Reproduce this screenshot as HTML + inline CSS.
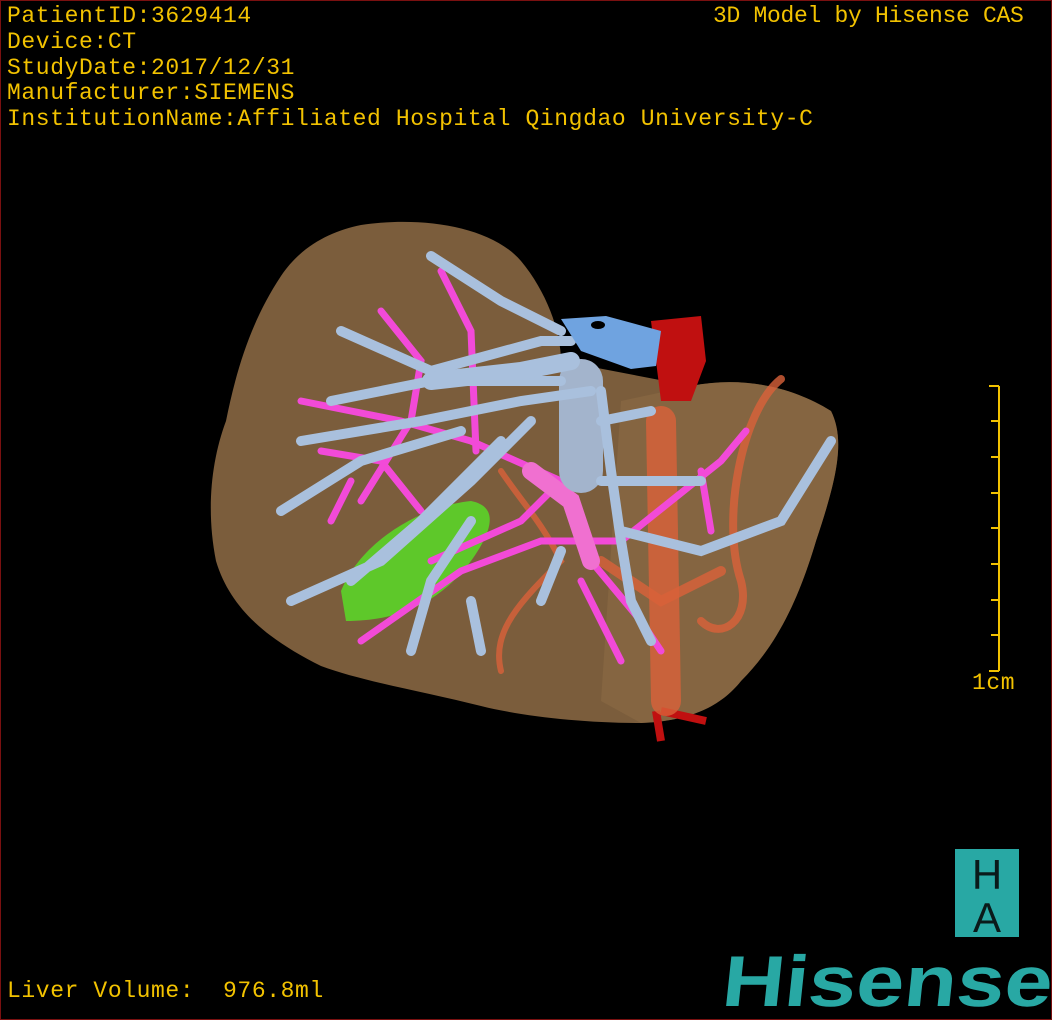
<!DOCTYPE html>
<html><head><meta charset="utf-8"><style>
html,body{margin:0;padding:0;background:#000;}
#w{position:relative;width:1052px;height:1020px;overflow:hidden;background:#000;box-sizing:border-box;border:1px solid #7a1010;}
.t{position:absolute;font-family:"Liberation Mono",monospace;color:#f2c200;font-size:23px;letter-spacing:0.6px;white-space:nowrap;line-height:25.8px;}
</style></head><body><div id="w">
<div class="t" style="left:6px;top:3px;">PatientID:3629414<br>Device:CT<br>StudyDate:2017/12/31<br>Manufacturer:SIEMENS<br>InstitutionName:Affiliated Hospital Qingdao University-C</div>
<div class="t" style="left:712px;top:3px;letter-spacing:-0.3px;">3D Model by Hisense CAS</div>
<div class="t" style="left:6px;top:978px;">Liver Volume:&nbsp; 976.8ml</div>
<div class="t" style="left:971px;top:670px;">1cm</div>
<svg width="1052" height="1020" style="position:absolute;left:0;top:0">
<g stroke="#f2c200" stroke-width="2">
<line x1="998" y1="385" x2="998" y2="670"/>
<line x1="988" y1="385" x2="998" y2="385"/><line x1="990" y1="420" x2="998" y2="420"/><line x1="990" y1="456" x2="998" y2="456"/><line x1="990" y1="492" x2="998" y2="492"/><line x1="990" y1="527" x2="998" y2="527"/><line x1="990" y1="563" x2="998" y2="563"/><line x1="990" y1="599" x2="998" y2="599"/><line x1="990" y1="634" x2="998" y2="634"/><line x1="988" y1="670" x2="998" y2="670"/>
</g>
<path d="M360,224 C420,215 490,225 520,260 C545,290 560,330 560,360 L690,385 C740,375 790,385 830,410 C845,440 835,480 815,540 C800,590 780,640 740,680 C720,705 690,720 640,722 C580,722 520,715 480,705 C420,690 360,680 320,665 C270,640 230,610 215,560 C205,510 210,460 225,420 C235,370 250,320 280,275 C300,245 330,230 360,224 Z" fill="#7b5d3c"/>
<path d="M690,385 C740,375 790,385 830,410 C845,440 835,480 815,540 C800,590 780,640 740,680 C720,705 690,720 640,722 L600,700 L620,400 Z" fill="#8c6a44" opacity="0.6"/>
<path d="M650,320 L700,315 L705,360 L690,400 L660,400 Z" fill="#c01010"/>
<path d="M655,710 L660,740 M660,710 L705,720" stroke="#c01010" stroke-width="8" fill="none"/>
<g fill="none" stroke="#d9623a" stroke-opacity="0.8" stroke-linecap="round">
<path d="M660,420 L665,700" stroke-width="30"/>
<path d="M780,378 C740,410 720,520 740,580 C750,620 720,640 700,620" stroke-width="8"/>
<path d="M500,470 C520,500 540,520 560,560 C520,600 490,630 500,670" stroke-width="6"/>
<path d="M600,560 L660,600 L720,570" stroke-width="10"/>
</g>
<path d="M340,590 C360,540 420,505 470,500 C495,505 495,525 470,560 C440,600 400,620 345,620 Z" fill="#5ec82a"/>
<g fill="none" stroke="#f24ad8" stroke-linecap="round">
<path d="M380,310 L420,360 L410,420 L360,500 M440,270 L470,330 L475,450 M300,400 L400,420 L470,440 L560,480 L590,560 L640,620 L660,650 M320,450 L380,460 L420,510 M360,640 L460,570 L540,540 L620,540 L720,460 L745,430 M560,480 L520,520 L430,560 M580,580 L600,620 L620,660 M350,480 L330,520 M700,470 L710,530" stroke-width="7"/>
<path d="M530,470 L570,500 L590,560" stroke-width="18" stroke="#f070d0"/>
</g>
<g fill="none" stroke="#a9c0dd" stroke-linecap="round">
<path d="M580,380 L580,470" stroke-width="44" stroke="#a3b4cc"/>
<path d="M430,255 L500,300 L560,330 M340,330 L430,370 L540,340 L570,340 M330,400 L430,380 L560,380 M300,440 L420,420 L520,400 L590,390 M280,510 L360,460 L460,430 M290,600 L380,560 L470,480 L530,420 M350,580 L420,520 L500,440 M410,650 L430,580 L470,520 M600,390 L610,470 L620,540 L630,600 L650,640 M600,420 L650,410 M600,480 L700,480 M620,530 L700,550 L780,520 L830,440 M560,550 L540,600 M470,600 L480,650" stroke-width="10"/>
<path d="M430,380 L520,370 L570,360" stroke-width="18"/>
</g>
<path d="M560,318 L605,315 L660,330 L655,365 L630,368 L580,350 Z" fill="#6fa3e0"/>
<ellipse cx="597" cy="324" rx="7" ry="4" fill="#000"/>
<rect x="954" y="848" width="64" height="88" fill="#28a8a4"/>
<text x="986" y="888" font-family="Liberation Sans,sans-serif" font-size="42" fill="#0a1a1a" text-anchor="middle">H</text>
<text x="986" y="931" font-family="Liberation Sans,sans-serif" font-size="42" fill="#0a1a1a" text-anchor="middle">A</text>
<text x="720" y="1005" font-family="Liberation Sans,sans-serif" font-size="72" font-weight="bold" fill="#28a8a4" textLength="330" lengthAdjust="spacingAndGlyphs" transform="skewX(-6) translate(105,0)">Hisense</text>
</svg>
</div></body></html>
